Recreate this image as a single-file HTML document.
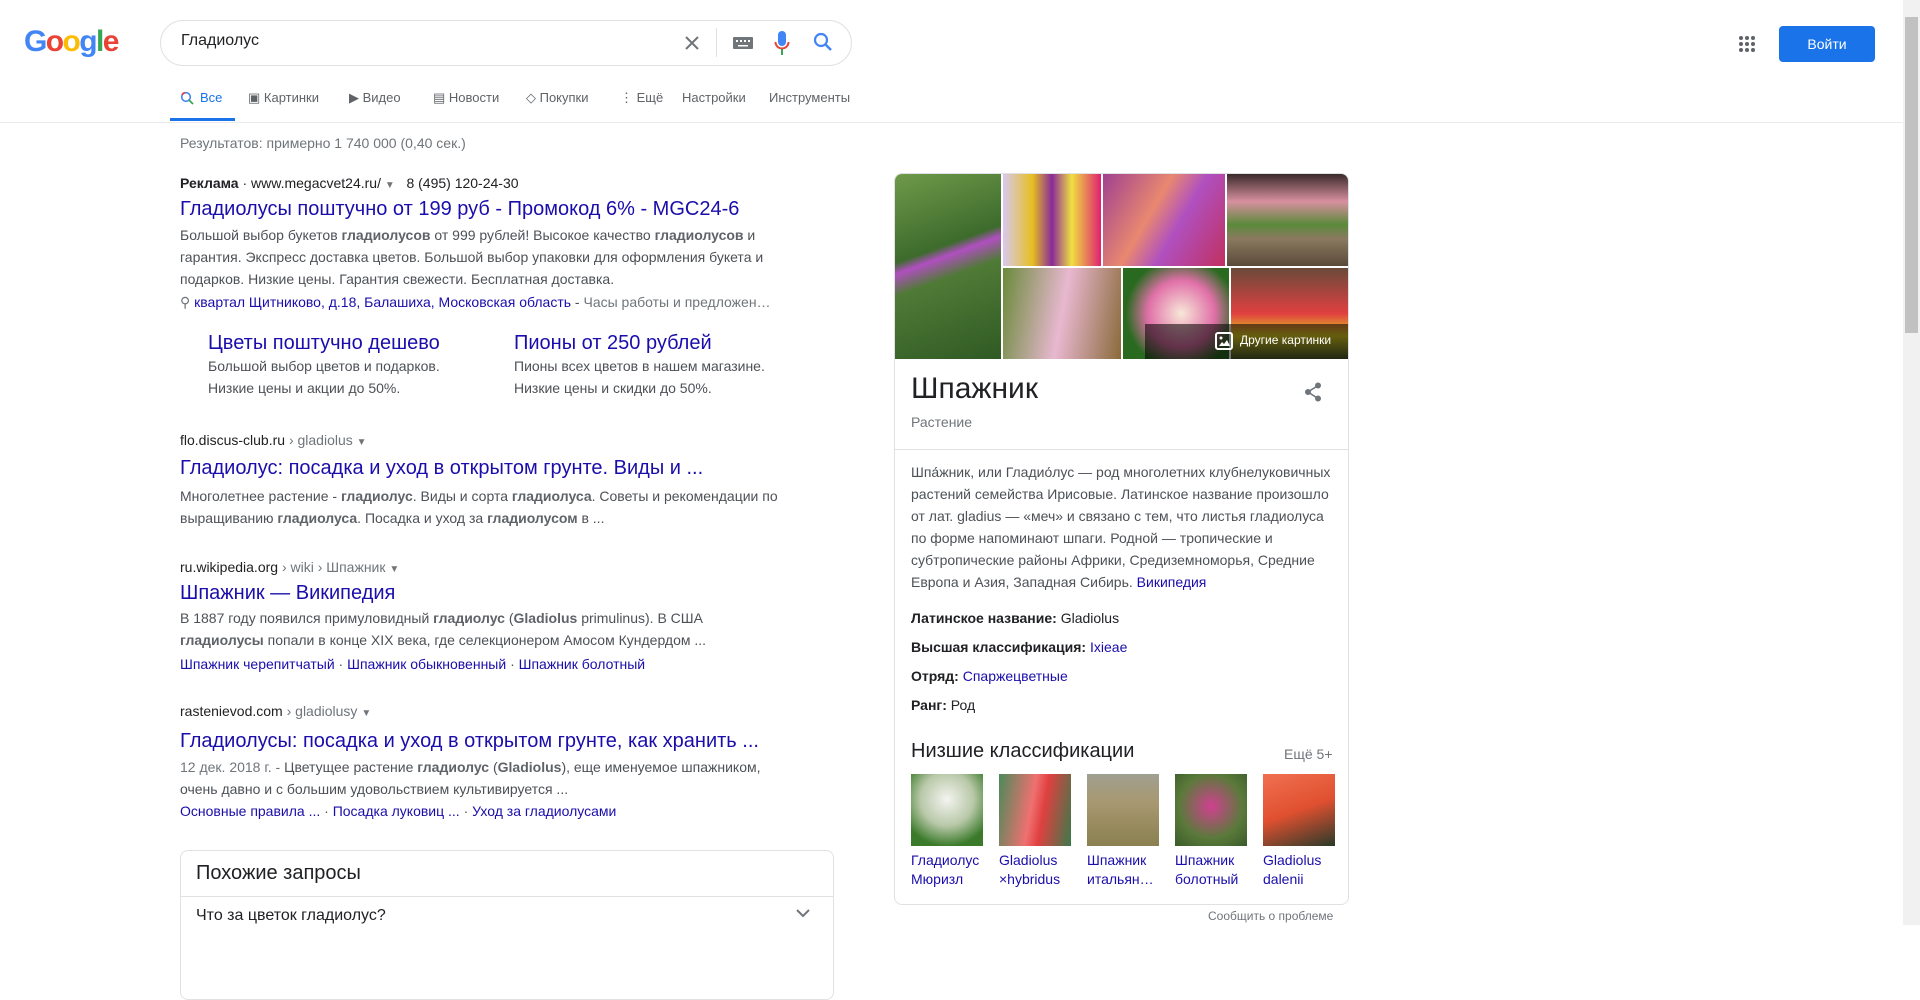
<!DOCTYPE html>
<html><head><meta charset="utf-8"><style>
*{margin:0;padding:0;box-sizing:border-box}
body{width:1920px;height:925px;overflow:hidden;background:#fff;font-family:"Liberation Sans",Arial,sans-serif;color:#202124;position:relative}
.a{position:absolute;white-space:nowrap}
.t{font-size:20px;color:#1a0dab;line-height:26px}
.s{font-size:14px;color:#4d5156;line-height:22px}
.u{font-size:14px;color:#202124;line-height:20px}
.g{color:#70757a}
b{color:#5f6368}
.l{color:#1a0dab}
.tab{position:absolute;top:90px;font-size:13px;color:#5f6368}
.im{position:absolute}
</style></head><body>
<!-- logo -->
<div class="a" style="left:24px;top:25px;font-size:30px;font-weight:bold;letter-spacing:-1.6px;font-family:'Liberation Sans',sans-serif"><span style="color:#4285f4">G</span><span style="color:#ea4335">o</span><span style="color:#fbbc05">o</span><span style="color:#4285f4">g</span><span style="color:#34a853">l</span><span style="color:#ea4335">e</span></div>
<!-- search -->
<div class="a" style="left:160px;top:20px;width:692px;height:46px;border:1px solid #dfe1e5;border-radius:24px"></div>
<div class="a" style="left:181px;top:32px;font-size:16px;color:#202124">Гладиолус</div>
<svg class="a" style="left:682px;top:33px" width="20" height="20" viewBox="0 0 20 20"><path d="M4 4L16 16M16 4L4 16" stroke="#70757a" stroke-width="2"/></svg>
<div class="a" style="left:716px;top:28px;width:1px;height:29px;background:#dfe1e5"></div>
<svg class="a" style="left:733px;top:36px" width="20" height="14"><rect x="0" y="1" width="20" height="12" rx="1" fill="#70757a"/><g fill="#fff"><rect x="3" y="4" width="2" height="2"/><rect x="7" y="4" width="2" height="2"/><rect x="11" y="4" width="2" height="2"/><rect x="15" y="4" width="2" height="2"/><rect x="5" y="9" width="10" height="1.5"/></g></svg>
<svg class="a" style="left:774px;top:30px" width="16" height="26"><rect x="4" y="1" width="8" height="15" rx="4" fill="#4285f4"/><path d="M1.5 12a6.5 6.5 0 0 0 13 0" stroke="#ea4335" stroke-width="2" fill="none"/><rect x="7" y="19" width="2" height="6" fill="#34a853"/></svg>
<svg class="a" style="left:812px;top:31px" width="22" height="22"><circle cx="9" cy="9" r="6" stroke="#4285f4" stroke-width="2.2" fill="none"/><path d="M13.5 13.5L19 19" stroke="#4285f4" stroke-width="2.5"/></svg>
<!-- right -->
<svg class="a" style="left:1739px;top:36px" width="16" height="16" fill="#5f6368"><circle cx="2" cy="2" r="2"/><circle cx="8" cy="2" r="2"/><circle cx="14" cy="2" r="2"/><circle cx="2" cy="8" r="2"/><circle cx="8" cy="8" r="2"/><circle cx="14" cy="8" r="2"/><circle cx="2" cy="14" r="2"/><circle cx="8" cy="14" r="2"/><circle cx="14" cy="14" r="2"/></svg>
<div class="a" style="left:1779px;top:26px;width:96px;height:36px;background:#1a73e8;border-radius:4px;color:#fff;font-size:14px;line-height:36px;text-align:center">Войти</div>
<div class="a" style="left:1903px;top:0;width:17px;height:925px;background:#f1f1f1"></div>
<div class="a" style="left:1905px;top:17px;width:13px;height:316px;background:#c1c1c1"></div>
<!-- tabs -->
<svg class="a" style="left:180px;top:91px" width="14" height="14"><circle cx="6" cy="6" r="4.3" fill="none" stroke="#4285f4" stroke-width="1.6"/><path d="M9 9l4 4" stroke="#34a853" stroke-width="1.8"/><path d="M2 4a4.5 4.5 0 0 1 3-2.5" stroke="#ea4335" stroke-width="1.6" fill="none"/></svg>
<div class="tab" style="left:200px;color:#1a73e8">Все</div>
<div class="a" style="left:170px;top:118px;width:65px;height:3px;background:#1a73e8"></div>
<div class="tab" style="left:248px">▣ Картинки</div>
<div class="tab" style="left:349px">▶ Видео</div>
<div class="tab" style="left:433px">▤ Новости</div>
<div class="tab" style="left:526px">◇ Покупки</div>
<div class="tab" style="left:620px">⋮ Ещё</div>
<div class="tab" style="left:682px">Настройки</div>
<div class="tab" style="left:769px">Инструменты</div>
<div class="a" style="left:0;top:122px;width:1903px;height:1px;background:#ebebeb"></div>
<div class="a" style="left:180px;top:135px;font-size:14px;color:#70757a">Результатов: примерно 1 740 000 (0,40 сек.)</div>
<!-- ad -->
<div class="a u" style="left:180px;top:173px"><b style="color:#202124">Реклама</b> · www.megacvet24.ru/ <span style="font-size:10px;color:#70757a">▼</span> &nbsp; 8 (495) 120-24-30</div>
<div class="a t" style="left:180px;top:196px">Гладиолусы поштучно от 199 руб - Промокод 6% - MGC24-6</div>
<div class="a s" style="left:180px;top:224px">Большой выбор букетов <b>гладиолусов</b> от 999 рублей! Высокое качество <b>гладиолусов</b> и<br>гарантия. Экспресс доставка цветов. Большой выбор упаковки для оформления букета и<br>подарков. Низкие цены. Гарантия свежести. Бесплатная доставка.</div>
<div class="a s" style="left:180px;top:291px"><span class="g">⚲</span> <span class="l">квартал Щитниково, д.18, Балашиха, Московская область</span> - <span class="g">Часы работы и предложен…</span></div>
<div class="a t" style="left:208px;top:330px">Цветы поштучно дешево</div>
<div class="a s" style="left:208px;top:355px">Большой выбор цветов и подарков.<br>Низкие цены и акции до 50%.</div>
<div class="a t" style="left:514px;top:330px">Пионы от 250 рублей</div>
<div class="a s" style="left:514px;top:355px">Пионы всех цветов в нашем магазине.<br>Низкие цены и скидки до 50%.</div>
<!-- r1 -->
<div class="a u" style="left:180px;top:430px">flo.discus-club.ru <span class="g">› gladiolus</span> <span style="font-size:10px;color:#70757a">▼</span></div>
<div class="a t" style="left:180px;top:455px">Гладиолус: посадка и уход в открытом грунте. Виды и ...</div>
<div class="a s" style="left:180px;top:485px">Многолетнее растение - <b>гладиолус</b>. Виды и сорта <b>гладиолуса</b>. Советы и рекомендации по<br>выращиванию <b>гладиолуса</b>. Посадка и уход за <b>гладиолусом</b> в ...</div>
<!-- r2 -->
<div class="a u" style="left:180px;top:557px">ru.wikipedia.org <span class="g">› wiki › Шпажник</span> <span style="font-size:10px;color:#70757a">▼</span></div>
<div class="a t" style="left:180px;top:580px">Шпажник — Википедия</div>
<div class="a s" style="left:180px;top:607px">В 1887 году появился примуловидный <b>гладиолус</b> (<b>Gladiolus</b> primulinus). В США<br><b>гладиолусы</b> попали в конце XIX века, где селекционером Амосом Кундердом ...</div>
<div class="a s" style="left:180px;top:653px"><span class="l">Шпажник черепитчатый</span> · <span class="l">Шпажник обыкновенный</span> · <span class="l">Шпажник болотный</span></div>
<!-- r3 -->
<div class="a u" style="left:180px;top:701px">rastenievod.com <span class="g">› gladiolusy</span> <span style="font-size:10px;color:#70757a">▼</span></div>
<div class="a t" style="left:180px;top:728px">Гладиолусы: посадка и уход в открытом грунте, как хранить ...</div>
<div class="a s" style="left:180px;top:756px"><span class="g">12 дек. 2018 г. -</span> Цветущее растение <b>гладиолус</b> (<b>Gladiolus</b>), еще именуемое шпажником,<br>очень давно и с большим удовольствием культивируется ...</div>
<div class="a s" style="left:180px;top:800px"><span class="l">Основные правила ...</span> · <span class="l">Посадка луковиц ...</span> · <span class="l">Уход за гладиолусами</span></div>
<!-- related -->
<div class="a" style="left:180px;top:850px;width:654px;height:150px;border:1px solid #dfe1e5;border-radius:8px"></div>
<div class="a" style="left:196px;top:862px;font-size:20px;color:#202124">Похожие запросы</div>
<div class="a" style="left:180px;top:896px;width:654px;height:1px;background:#dfe1e5"></div>
<div class="a" style="left:196px;top:907px;font-size:16px;color:#202124">Что за цветок гладиолус?</div>
<svg class="a" style="left:796px;top:908px" width="14" height="10"><path d="M1 2l6 6 6-6" stroke="#70757a" stroke-width="2" fill="none"/></svg>
<!-- knowledge panel -->
<div class="a" style="left:894px;top:173px;width:455px;height:732px;border:1px solid #dfe1e5;border-radius:8px;overflow:hidden">
<div class="im" style="left:0;top:0;width:106px;height:185px;background:linear-gradient(160deg,#6f9a4a,#3d6b2c 40%,#b04fc0 45%,#4f7a36 55%,#2f5a24)"></div>
<div class="im" style="left:108px;top:0;width:98px;height:92px;background:linear-gradient(90deg,#d8c8f0,#e6c020 30%,#8a2a9a 50%,#f0e040 70%,#e02070)"></div>
<div class="im" style="left:208px;top:0;width:122px;height:92px;background:linear-gradient(120deg,#a04090,#e88870 40%,#b050c0 60%,#c03060)"></div>
<div class="im" style="left:332px;top:0;width:123px;height:92px;background:linear-gradient(180deg,#3a2a2a,#d890a0 30%,#5a8a3a 55%,#8a7a60 70%,#5a4a3a)"></div>
<div class="im" style="left:108px;top:94px;width:118px;height:91px;background:linear-gradient(100deg,#6a8a3a,#e8b8d0 50%,#8a6a3a)"></div>
<div class="im" style="left:228px;top:94px;width:106px;height:91px;background:radial-gradient(circle at 55% 50%,#f8e8d8,#e070a8 45%,#2a6a20 75%)"></div>
<div class="im" style="left:336px;top:94px;width:119px;height:91px;background:linear-gradient(180deg,#6a4a3a,#e04040 50%,#e0d020 75%,#4a5a2a)"></div>
<div class="im" style="left:250px;top:150px;width:205px;height:35px;background:rgba(0,0,0,.55)"></div>
<svg class="im" style="left:320px;top:158px" width="18" height="18"><rect x="1" y="1" width="16" height="16" rx="2" stroke="#fff" stroke-width="2" fill="none"/><path d="M4 14l3-4 2 2 3-4 3 6z" fill="#fff"/><circle cx="6" cy="6" r="1.5" fill="#fff"/></svg>
<div class="im" style="left:345px;top:159px;font-size:12px;color:#fff;white-space:nowrap">Другие картинки</div>
<div class="im" style="left:16px;top:198px;font-size:30px;color:#202124">Шпажник</div>
<svg class="im" style="left:409px;top:208px" width="18" height="20" fill="#70757a"><circle cx="14" cy="3.5" r="3"/><circle cx="4" cy="10" r="3"/><circle cx="14" cy="16.5" r="3"/><path d="M14 3.5L4 10l10 6.5" stroke="#70757a" stroke-width="1.6" fill="none"/></svg>
<div class="im" style="left:16px;top:240px;font-size:14px;color:#70757a">Растение</div>
<div class="im" style="left:0;top:275px;width:455px;height:1px;background:#dfe1e5"></div>
<div class="im s" style="left:16px;top:287px;width:425px;white-space:normal;color:#4d5156">Шпа́жник, или Гладио́лус — род многолетних клубнелуковичных растений семейства Ирисовые. Латинское название произошло от лат. gladius — «меч» и связано с тем, что листья гладиолуса по форме напоминают шпаги. Родной — тропические и субтропические районы Африки, Средиземноморья, Средние Европа и Азия, Западная Сибирь. <span class="l">Википедия</span></div>
<div class="im u" style="left:16px;top:434px;white-space:nowrap"><b style="color:#202124">Латинское название:</b> Gladiolus</div>
<div class="im u" style="left:16px;top:463px;white-space:nowrap"><b style="color:#202124">Высшая классификация:</b> <span class="l">Ixieae</span></div>
<div class="im u" style="left:16px;top:492px;white-space:nowrap"><b style="color:#202124">Отряд:</b> <span class="l">Спаржецветные</span></div>
<div class="im u" style="left:16px;top:521px;white-space:nowrap"><b style="color:#202124">Ранг:</b> Род</div>
<div class="im" style="left:16px;top:566px;font-size:20px;color:#202124;white-space:nowrap">Низшие классификации</div>
<div class="im" style="left:389px;top:572px;font-size:14px;color:#70757a;white-space:nowrap">Ещё 5+</div>
<div class="im" style="left:16px;top:600px;width:72px;height:72px;background:radial-gradient(circle at 50% 35%,#f4f4f0,#b8c8a8 45%,#3a7a2a 80%)"></div>
<div class="im" style="left:104px;top:600px;width:72px;height:72px;background:linear-gradient(100deg,#4a8a5a,#f07070 45%,#e04040 60%,#3a7a4a)"></div>
<div class="im" style="left:192px;top:600px;width:72px;height:72px;background:linear-gradient(180deg,#a0a090,#a89870 40%,#8a8050)"></div>
<div class="im" style="left:280px;top:600px;width:72px;height:72px;background:radial-gradient(circle at 50% 45%,#d04090,#5a7a3a 60%,#3a5a2a)"></div>
<div class="im" style="left:368px;top:600px;width:72px;height:72px;background:linear-gradient(160deg,#f07050,#e05030 50%,#2a3a2a)"></div>
<div class="im" style="left:16px;top:677px;font-size:14px;line-height:19px;color:#1a0dab">Гладиолус<br>Мюризл</div>
<div class="im" style="left:104px;top:677px;font-size:14px;line-height:19px;color:#1a0dab">Gladiolus<br>×hybridus</div>
<div class="im" style="left:192px;top:677px;font-size:14px;line-height:19px;color:#1a0dab;white-space:nowrap">Шпажник<br>итальян…</div>
<div class="im" style="left:280px;top:677px;font-size:14px;line-height:19px;color:#1a0dab">Шпажник<br>болотный</div>
<div class="im" style="left:368px;top:677px;font-size:14px;line-height:19px;color:#1a0dab">Gladiolus<br>dalenii</div>
</div>
<div class="a" style="left:1208px;top:909px;font-size:12px;color:#70757a">Сообщить о проблеме</div>
</body></html>
